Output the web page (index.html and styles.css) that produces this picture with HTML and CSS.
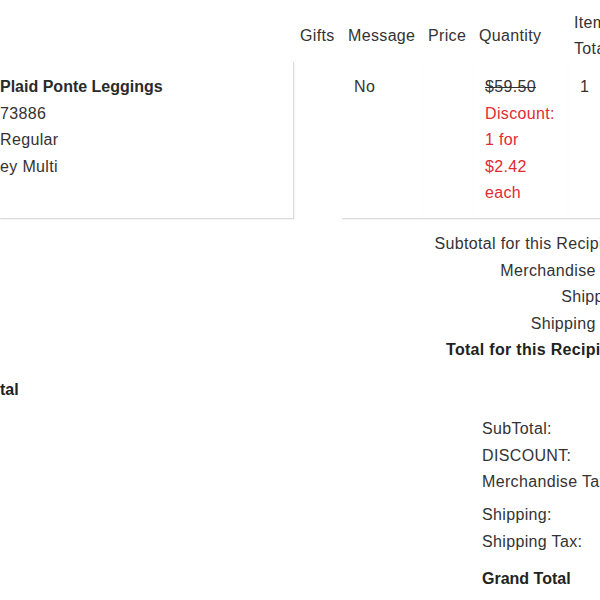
FILE: index.html
```html
<!DOCTYPE html>
<html lang="en">
<head>
<meta charset="utf-8">
<title>Order Summary</title>
<link rel="stylesheet" href="styles.css">
</head>
<body>
<div class="page">
  <section class="recipient">
    <div class="item-col">
      <div class="item-card">
        <div class="item-name">Plaid Ponte Leggings</div>
        <div class="line">73886</div>
        <div class="line">Regular</div>
        <div class="line">ey Multi</div>
      </div>
    </div>
    <div class="order-table">
      <div class="th">Gifts</div>
      <div class="th">Message</div>
      <div class="th">Price</div>
      <div class="th">Quantity</div>
      <div class="th th-narrow">Item Total</div>

      <div class="td td-first"></div>
      <div class="td">No</div>
      <div class="td"></div>
      <div class="td td-price">
        <div class="strike">$59.50</div>
        <div class="discount">Discount: 1 for $2.42 each</div>
      </div>
      <div class="td">1</div>
    </div>
  </section>

  <section class="recipient-summary">
    <div class="sum-line">Subtotal for this Recipient:</div>
    <div class="sum-line">Merchandise Tax:</div>
    <div class="sum-line">Shipping:</div>
    <div class="sum-line">Shipping Tax:</div>
    <div class="sum-line sum-total">Total for this Recipient:</div>
  </section>

  <h2 class="order-heading">tal</h2>

  <section class="order-summary">
    <div class="os-line">SubTotal:</div>
    <div class="os-line">DISCOUNT:</div>
    <div class="os-line">Merchandise Tax:</div>
    <div class="os-line os-gap">Shipping:</div>
    <div class="os-line">Shipping Tax:</div>
    <div class="os-line os-grand">Grand Total</div>
  </section>
</div>
</body>
</html>
```

FILE: styles.css
```css
html, body {
  margin: 0;
  padding: 0;
  background: #ffffff;
  overflow: hidden;
}

body {
  font-family: "Liberation Sans", Arial, Helvetica, sans-serif;
  font-size: 16px;
  line-height: 26.5px;
  color: #333333;
  letter-spacing: 0.35px;
}

.page {
  width: 760px;
}

/* top section */
.recipient {
  display: flex;
  align-items: flex-start;
}

.item-col {
  width: 294px;
  flex: none;
  padding-top: 62px;
}

.item-card {
  height: 144px;
  padding-top: 12px;
  border-right: 1px solid #dcdcdc;
  border-bottom: 1px solid #dcdcdc;
  box-shadow: 1px 1px 1px rgba(0, 0, 0, 0.04);
}

.item-name {
  font-weight: bold;
  letter-spacing: 0;
  color: #2a2a2a;
}

.order-table {
  display: grid;
  grid-template-columns: 48px 80px 51px 95px 60px;
}

.th {
  padding: 12px 0 0 6px;
  height: 60px;
  box-sizing: border-box;
  display: flex;
  align-items: center;
}

.th-narrow {
  width: 54px;
  box-sizing: content-box;
  height: 48px;
}

.td {
  padding: 14px 0 11px 12px;
  border-bottom: 1px solid #dcdcdc;
  box-shadow: 0 1px 1px rgba(0, 0, 0, 0.03);
}

.td-first {
  border-bottom-color: transparent;
  box-shadow: none;
}

.td-price {
  padding-right: 9px;
}

.strike {
  text-decoration: line-through;
}

.discount {
  color: #e12a33;
}

/* recipient summary */
.recipient-summary {
  margin-top: 12px;
  width: 631px;
  display: flex;
  flex-direction: column;
  align-items: flex-end;
}

.sum-total {
  font-weight: bold;
  letter-spacing: 0.3px;
  color: #222222;
}

/* order total */
.order-heading {
  margin: 13px 0 0 0;
  font-size: 16px;
  line-height: 26.5px;
  font-weight: bold;
  letter-spacing: 0;
  color: #222222;
}

.order-summary {
  margin: 13px 0 0 482px;
}

.os-gap {
  margin-top: 6.5px;
}

.os-grand {
  margin-top: 11px;
  font-weight: bold;
  letter-spacing: 0;
  color: #222222;
}
```
